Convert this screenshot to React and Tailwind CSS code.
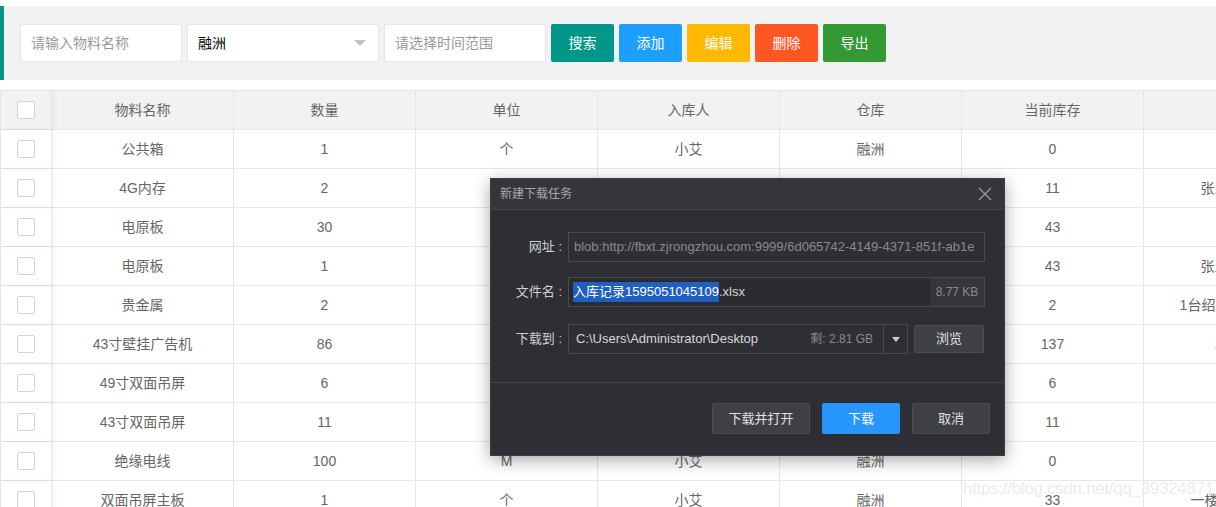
const rows = [
  ['公共箱', '1', '个', '小艾', '融洲', '0', ''],
  ['4G内存', '2', '个', '小艾', '融洲', '11', '张三丰已领用1台'],
  ['电原板', '30', '块', '小艾', '融洲', '43', ''],
  ['电原板', '1', '块', '小艾', '融洲', '43', '张三丰已领用1台'],
  ['贵金属', '2', '个', '小艾', '融洲', '2', '1台绍兴项目已领用一台'],
  ['43寸壁挂广告机', '86', '台', '小艾', '融洲', '137', '1号仓库货架'],
  ['49寸双面吊屏', '6', '台', '小艾', '融洲', '6', ''],
  ['43寸双面吊屏', '11', '台', '小艾', '融洲', '11', ''],
  ['绝缘电线', '100', 'M', '小艾', '融洲', '0', ''],
  ['双面吊屏主板', '1', '个', '小艾', '融洲', '33', '一楼仓库货架第三层'],
]

const headers = ['物料名称', '数量', '单位', '入库人', '仓库', '当前库存', '备注']

function Checkbox() {
  return <div className="w-[18px] h-[18px] border border-[#d2d2d2] rounded-[2px] bg-white" />
}

function Row({ cells, head }) {
  return (
    <div className={`flex h-[39px] border-b border-[#e6e6e6] ${head ? 'bg-[#f2f2f2]' : 'bg-white'}`}>
      <div className="w-[51px] shrink-0 flex items-center justify-center border-r border-[#e6e6e6] shadow-[2px_0_5px_rgba(0,0,0,0.05)]">
        <Checkbox />
      </div>
      {cells.map((c, i) => (
        <div
          key={i}
          className={`${i === 6 ? 'w-[220px]' : 'w-[182px]'} shrink-0 flex items-center justify-center border-r border-[#e6e6e6] whitespace-nowrap overflow-hidden`}
        >
          {c}
        </div>
      ))}
    </div>
  )
}

function Label({ children }) {
  return <div className="w-[77px] pr-[6px] text-right text-[13px] text-[#d0d0d0]">{children}</div>
}

export default function App() {
  return (
    <div
      className="relative w-[1216px] h-[507px] overflow-hidden bg-white text-[14px] text-[#666]"
      style={{ fontFamily: "'Liberation Sans', 'Noto Sans CJK SC', sans-serif" }}
    >
      <div className="pt-[6px]">
        <div className="h-[74px] bg-[#f2f2f2] border-l-[4px] border-[#009688] flex items-center pl-[16px] gap-[5px]">
          <div className="w-[162px] h-[38px] bg-white border border-[#e6e6e6] rounded-[2px] flex items-center px-[10px] text-[#999]">
            请输入物料名称
          </div>
          <div className="w-[192px] h-[38px] bg-white border border-[#e6e6e6] rounded-[2px] flex items-center justify-between px-[10px] text-black">
            <span>融洲</span>
            <span className="w-0 h-0 border-x-[6px] border-x-transparent border-t-[6px] border-t-[#c2c2c2] mr-[2px]" />
          </div>
          <div className="w-[162px] h-[38px] bg-white border border-[#e6e6e6] rounded-[2px] flex items-center px-[10px] text-[#999]">
            请选择时间范围
          </div>
          <div className="w-[63px] h-[38px] rounded-[2px] bg-[#009688] text-white flex items-center justify-center">搜索</div>
          <div className="w-[63px] h-[38px] rounded-[2px] bg-[#1e9fff] text-white flex items-center justify-center">添加</div>
          <div className="w-[63px] h-[38px] rounded-[2px] bg-[#ffb800] text-white flex items-center justify-center">编辑</div>
          <div className="w-[63px] h-[38px] rounded-[2px] bg-[#ff5722] text-white flex items-center justify-center">删除</div>
          <div className="w-[63px] h-[38px] rounded-[2px] bg-[#339933] text-white flex items-center justify-center">导出</div>
        </div>
      </div>

      <div className="mt-[10px] border-t border-l border-[#e6e6e6]">
        <Row head cells={headers} />
        {rows.map((r, i) => (
          <Row key={i} cells={r} />
        ))}
      </div>

      <div className="absolute right-[2px] bottom-[6px] text-[17px] text-[#ececec] tracking-[-0.3px]">
        https://blog.csdn.net/qq_39324871
      </div>

      <div className="absolute left-[490px] top-[178px] w-[515px] h-[278px] bg-[#2e2f34] border border-[#3c3d42] shadow-[0_4px_16px_rgba(0,0,0,0.35)] flex flex-col">
        <div className="h-[31px] shrink-0 bg-[#35363b] border-b border-[#45464b] flex items-center justify-between pl-[9px] pr-[12px]">
          <span className="text-[12px] text-[#a8a8a8]">新建下载任务</span>
          <svg width="14" height="14" viewBox="0 0 14 14">
            <path d="M1 1L13 13M13 1L1 13" stroke="#9a9a9e" strokeWidth="1.3" />
          </svg>
        </div>

        <div className="pt-[22px] flex flex-col gap-[15px]">
          <div className="flex items-center">
            <Label>网址 :</Label>
            <div className="w-[417px] h-[30px] border border-[#4a4b50] flex items-center px-[5px] text-[13px] text-[#8a8a8e] whitespace-nowrap overflow-hidden">
              blob:http://fbxt.zjrongzhou.com:9999/6d065742-4149-4371-851f-ab1e
            </div>
          </div>
          <div className="flex items-center">
            <Label>文件名 :</Label>
            <div className="w-[417px] h-[30px] border border-[#4a4b50] flex text-[13px]">
              <div className="flex-1 bg-[#2a2b2f] flex items-center pl-[4px] text-[#d8d8d8]">
                <span className="bg-[#1f5fbf] text-white">入库记录1595051045109</span>
                <span>.xlsx</span>
              </div>
              <div className="w-[54px] bg-[#35363a] flex items-center justify-center text-[#8a8a8e] text-[12px]">8.77 KB</div>
            </div>
          </div>
          <div className="flex items-center mt-[2px]">
            <Label>下载到 :</Label>
            <div className="w-[340px] h-[30px] border border-[#4a4b50] flex text-[13px]">
              <div className="flex-1 flex items-center justify-between pl-[7px] pr-[10px]">
                <span className="text-[#d8d8d8]">C:\Users\Administrator\Desktop</span>
                <span className="text-[#8a8a8e] text-[12px]">剩: 2.81 GB</span>
              </div>
              <div className="w-[24px] border-l border-[#4a4b50] flex items-center justify-center">
                <span className="w-0 h-0 border-x-[4px] border-x-transparent border-t-[5px] border-t-[#cfcfcf]" />
              </div>
            </div>
            <div className="ml-[6px] w-[70px] h-[28px] rounded-[2px] bg-[#3f4045] border border-[#4d4e53] flex items-center justify-center text-[13px] text-[#e0e0e0]">
              浏览
            </div>
          </div>
        </div>

        <div className="mt-[28px] border-t border-[#46474c] flex justify-end gap-[12px] pt-[20px] pr-[14px]">
          <div className="w-[98px] h-[31px] rounded-[2px] bg-[#3f4045] border border-[#4d4e53] flex items-center justify-center text-[13px] text-[#e0e0e0]">
            下载并打开
          </div>
          <div className="w-[78px] h-[31px] rounded-[2px] bg-[#2896ff] flex items-center justify-center text-[13px] text-white">
            下载
          </div>
          <div className="w-[78px] h-[31px] rounded-[2px] bg-[#3f4045] border border-[#4d4e53] flex items-center justify-center text-[13px] text-[#e0e0e0]">
            取消
          </div>
        </div>
      </div>
    </div>
  )
}
